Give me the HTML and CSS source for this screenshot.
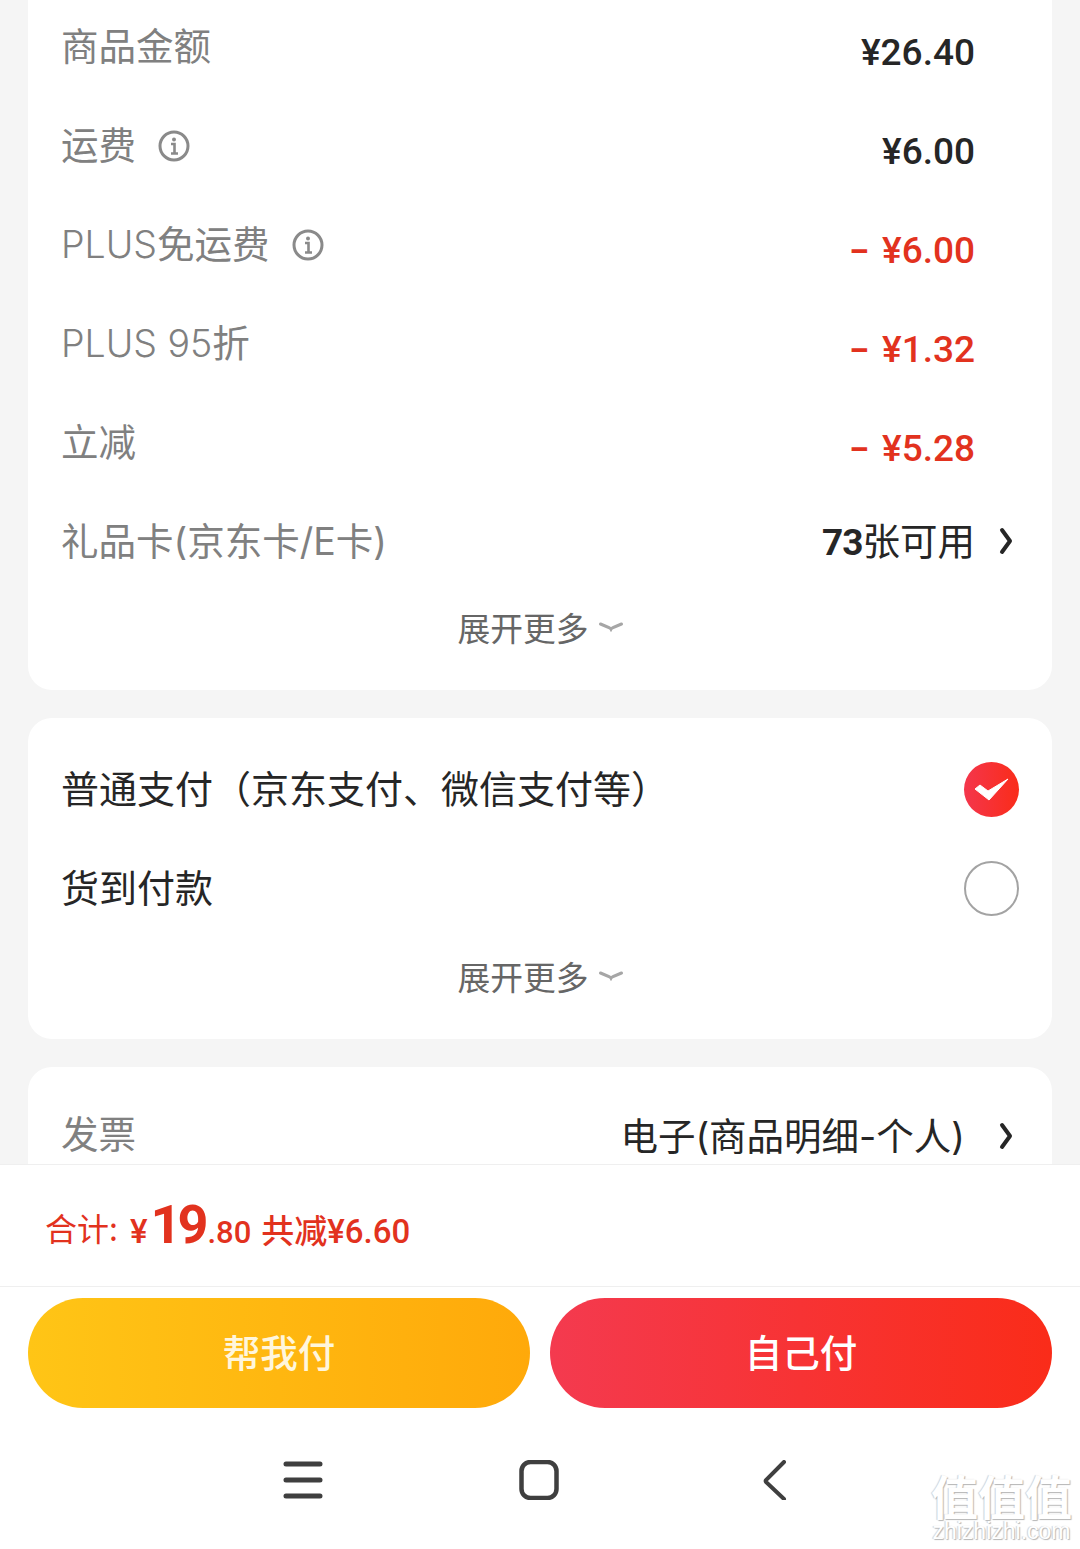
FILE: index.html
```html
<!DOCTYPE html>
<html lang="zh-CN">

<head>
    <meta charset="UTF-8">
    <meta name="viewport" content="width=device-width, initial-scale=1.0">
    <title>订单结算</title>
    <link rel="stylesheet" href="styles.css">
</head>

<body>
    <main class="scroll-area">
        <section class="card card-price">
            <div class="row">
                <span class="label">商品金额</span>
                <span class="amount">¥26.40</span>
            </div>
            <div class="row">
                <span class="label">运费
                    <svg class="info-icon" viewBox="0 0 32 32"><circle cx="16" cy="16" r="14" fill="none" stroke="#8a8a8a" stroke-width="3"/><circle cx="16" cy="9.5" r="2" fill="#8a8a8a"/><path d="M13 14h3.500v9M13 23.500h7" fill="none" stroke="#8a8a8a" stroke-width="2.600"/></svg>
                </span>
                <span class="amount">¥6.00</span>
            </div>
            <div class="row">
                <span class="label">
                    <span><span class="latin">PLUS</span>免运费</span>
                    <svg class="info-icon" viewBox="0 0 32 32"><circle cx="16" cy="16" r="14" fill="none" stroke="#8a8a8a" stroke-width="3"/><circle cx="16" cy="9.5" r="2" fill="#8a8a8a"/><path d="M13 14h3.500v9M13 23.500h7" fill="none" stroke="#8a8a8a" stroke-width="2.600"/></svg>
                </span>
                <span class="amount red"><span class="minus">–</span>¥6.00</span>
            </div>
            <div class="row">
                <span class="label"><span><span class="latin">PLUS 95</span>折</span></span>
                <span class="amount red"><span class="minus">–</span>¥1.32</span>
            </div>
            <div class="row">
                <span class="label">立减</span>
                <span class="amount red"><span class="minus">–</span>¥5.28</span>
            </div>
            <div class="row">
                <span class="label">礼品卡(京东卡/E卡)</span>
                <span class="value-link">
                    <span class="value-text"><b>73</b>张可用</span>
                    <svg class="arrow-icon" viewBox="0 0 14 28"><path d="M3 3l8 11-8 11" fill="none" stroke="#262626" stroke-width="4" stroke-linecap="round" stroke-linejoin="round"/></svg>
                </span>
            </div>
            <div class="more more-first">展开更多
                <svg class="more-icon" viewBox="0 0 24 10"><path d="M1.500 2q10 4 10.500 5q.5-1 10.500-5" fill="none" stroke="#a6a6a6" stroke-width="3" stroke-linecap="round"/></svg>
            </div>
        </section>

        <section class="card card-pay">
            <div class="row">
                <span class="label dark">普通支付（京东支付、微信支付等）</span>
                <span class="radio radio-on">
                    <svg viewBox="0 0 55 55"><path d="M11 27l5-4 8 6 20-12-19 21z" fill="#fff" stroke="#fff" stroke-width="1" stroke-linejoin="round"/></svg>
                </span>
            </div>
            <div class="row">
                <span class="label dark">货到付款</span>
                <span class="radio"></span>
            </div>
            <div class="more more-second">展开更多
                <svg class="more-icon" viewBox="0 0 24 10"><path d="M1.500 2q10 4 10.500 5q.5-1 10.500-5" fill="none" stroke="#a6a6a6" stroke-width="3" stroke-linecap="round"/></svg>
            </div>
        </section>

        <section class="card card-invoice">
            <div class="row">
                <span class="label">发票</span>
                <span class="value-link">
                    <span class="value-text invoice-text">电子(商品明细-个人)</span>
                    <svg class="arrow-icon" viewBox="0 0 14 28"><path d="M3 3l8 11-8 11" fill="none" stroke="#262626" stroke-width="4" stroke-linecap="round" stroke-linejoin="round"/></svg>
                </span>
            </div>
        </section>
    </main>

    <footer class="footer">
        <div class="total">
            <span class="total-label">合计:</span>
            <span class="total-yen">¥</span><span class="total-big">19</span><span class="total-small">.80</span>
            <span class="total-off">共减¥6.60</span>
        </div>
        <div class="buttons">
            <button class="pay-btn pay-yellow">帮我付</button>
            <button class="pay-btn pay-red">自己付</button>
        </div>
        <nav class="nav-bar">
            <svg class="nav-icon" viewBox="0 0 40 40"><path d="M3 4h34M3 20h34M3 36h34" stroke="#3f3f3f" stroke-width="5" stroke-linecap="round"/></svg>
            <svg class="nav-icon" viewBox="0 0 40 40"><rect x="2.500" y="2" width="35" height="36" rx="9" fill="none" stroke="#3f3f3f" stroke-width="4.500"/></svg>
            <svg class="nav-icon" viewBox="0 0 40 40"><path d="M29 2L11 20c-.5.600-.5 1.200 0 2l18 17" fill="none" stroke="#3f3f3f" stroke-width="4" stroke-linecap="round"/></svg>
        </nav>
        <div class="watermark">
            <span class="wm-title">值值值</span>
            <span class="wm-site">zhizhizhi.com</span>
        </div>
    </footer>
</body>

</html>
```

FILE: styles.css
```css
* {
    box-sizing: border-box;
}

html,
body {
    margin: 0;
    height: 1549px;
    overflow: hidden;
}

body {
    display: flex;
    flex-direction: column;
    background-color: #f5f5f5;
    font-family: "Noto Sans CJK SC", "Noto Sans", sans-serif;
}

.scroll-area {
    flex: 1;
    min-height: 0;
    overflow: hidden;
    padding: 0 28px;
}

.card {
    background-color: #fff;
    border-radius: 24px;
    margin-bottom: 28px;
    padding: 0 33px;
}

/* the first card is scrolled past the top of the window */
.card-price {
    margin-top: -24px;
    padding-top: 22px;
    height: 714px;
}

.card-pay {
    height: 321px;
    padding-top: 22px;
}

.card-invoice {
    height: 120px;
    padding-top: 19px;
}

.row {
    display: flex;
    align-items: center;
    justify-content: space-between;
    height: 99px;
}

.label {
    display: flex;
    align-items: center;
    gap: 22px;
    padding-bottom: 2px;
    font-family: Inter, "Noto Sans CJK SC", sans-serif;
    font-size: 37.500px;
    line-height: 50px;
    color: #808080;
    white-space: nowrap;
}

.label.dark {
    font-size: 38px;
    color: #262626;
}

.latin {
    font-weight: 300;
}

.info-icon {
    width: 32px;
    height: 32px;
}

.amount {
    display: flex;
    align-items: center;
    margin-top: 10px;
    margin-right: 44px;
    font-family: Roboto, sans-serif;
    font-size: 37px;
    font-weight: 500;
    color: #262626;
    white-space: pre;
}

.amount.red {
    color: #e2321e;
}

.minus {
    margin-right: 14px;
    font-size: 30px;
    font-weight: 900;
}

.value-link {
    display: flex;
    align-items: center;
    gap: 24px;
    margin-right: 6px;
    color: #262626;
}

.value-text {
    padding-bottom: 4px;
    font-size: 37.500px;
    line-height: 50px;
    white-space: nowrap;
}

.value-text b {
    font-family: Roboto, sans-serif;
    font-weight: 700;
    font-size: 37px;
    letter-spacing: -1px;
}

/* the closing bracket leaves a little air before the arrow */
.invoice-text {
    margin-right: 10px;
    padding: 2px 0 0;
    font-family: Inter, "Noto Sans CJK SC", sans-serif;
}

.arrow-icon {
    width: 14px;
    height: 28px;
}

.card-price .arrow-icon {
    margin-bottom: 3px;
}

.more {
    display: flex;
    align-items: center;
    justify-content: center;
    gap: 10px;
    font-size: 32.800px;
    color: #666;
}

.more-first {
    height: 68px;
}

.more-second {
    height: 74px;
}

.more-icon {
    width: 24px;
    height: 10px;
    margin-top: 2px;
}

.radio {
    width: 55px;
    height: 55px;
    border: 2px solid #a3a3a3;
    border-radius: 50%;
}

.radio svg {
    display: block;
    width: 55px;
    height: 55px;
}

.radio-on {
    border: none;
    background: linear-gradient(90deg, #f4364c, #fa2c19);
}

.footer {
    position: relative;
    flex: none;
    height: 385px;
    background-color: #fff;
    border-top: 1px solid #efefef;
}

.total {
    display: flex;
    align-items: baseline;
    height: 122px;
    padding: 28px 0 0 45px;
    border-bottom: 1px solid #efefef;
    color: #e2321e;
    font-family: Roboto, sans-serif;
    font-weight: 500;
    white-space: nowrap;
}

.total-label {
    margin-right: 12px;
    font-family: "Noto Sans CJK SC", sans-serif;
    font-weight: 400;
    font-size: 32px;
    transform: translateY(-2px);
}

.total-yen {
    font-size: 33px;
}

.total-big {
    font-size: 54px;
    font-weight: 700;
    margin-left: 3px;
    letter-spacing: -4px;
}

.total-small {
    font-size: 31px;
    margin-left: 3px;
    margin-right: 10px;
}

.total-off {
    font-size: 33px;
    font-family: Roboto, "Noto Sans CJK SC", sans-serif;
}

.buttons {
    display: flex;
    gap: 20px;
    padding: 11px 28px 0;
}

.pay-btn {
    flex: 1;
    height: 110px;
    padding-bottom: 6px;
    border: none;
    border-radius: 55px;
    font-family: "Noto Sans CJK SC", sans-serif;
    font-size: 37.500px;
    font-weight: 500;
    color: #fff6dc;
}

.pay-yellow {
    background: linear-gradient(90deg, #ffc516, #ffa90a);
}

.pay-red {
    background: linear-gradient(90deg, #f43a4f, #fa2c19);
    color: #fff;
}

.nav-bar {
    display: flex;
    justify-content: center;
    gap: 196px;
    padding: 52px 2px 0 0;
}

.nav-icon {
    width: 40px;
    height: 40px;
}

/* site stamp sits on top of the nav bar */
.watermark {
    position: absolute;
    right: 8px;
    bottom: 8px;
    display: flex;
    flex-direction: column;
    align-items: center;
    color: #fff;
    text-shadow: 1px 1px 1px #b5b5b5, -1px 0 1px #d0d0d0;
}

.wm-title {
    font-size: 47px;
    line-height: 52px;
    font-weight: 700;
}

.wm-site {
    font-family: "Liberation Sans", sans-serif;
    font-size: 23px;
    line-height: 20px;
}
```
